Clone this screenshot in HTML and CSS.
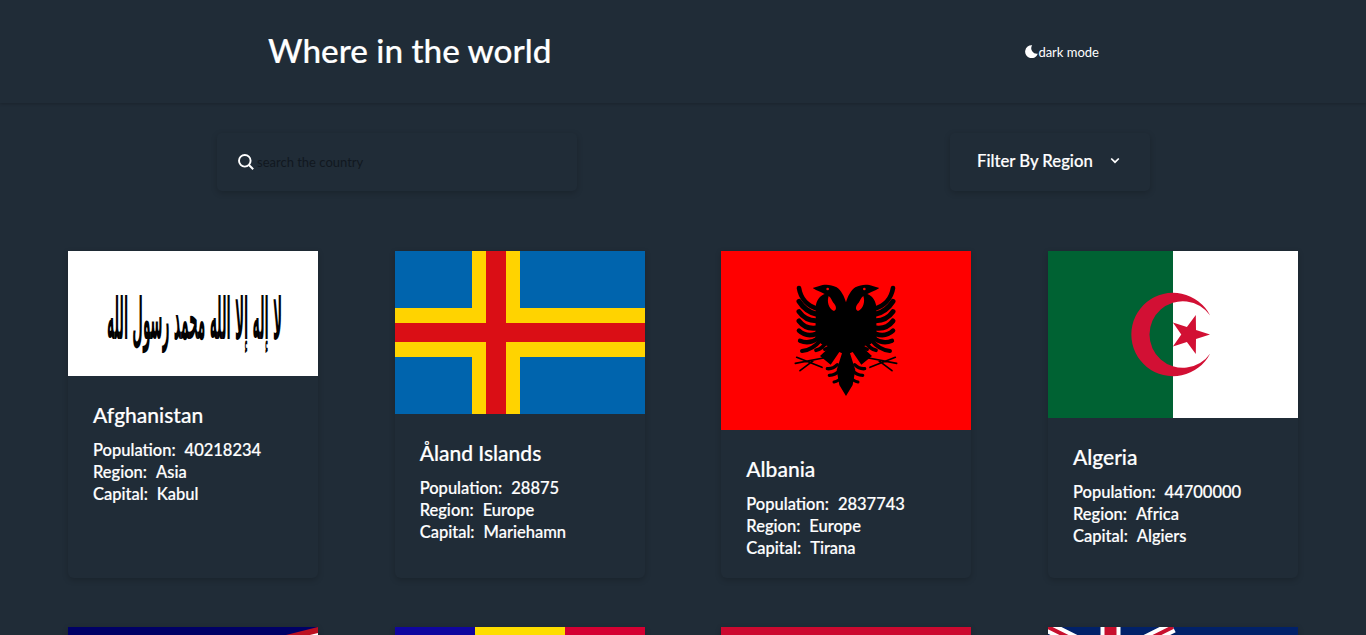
FILE: index.html
```html
<!DOCTYPE html>
<html lang="en">
<head>
<meta charset="utf-8">
<title>Where in the world</title>
<link rel="stylesheet" href="styles.css">
</head>
<body>
<header class="site-header">
  <h1 class="site-title">Where in the world</h1>
  <button class="mode-toggle" type="button">
    <svg class="moon" viewBox="0 0 12 12"><path d="M6.6 0.2A6 6 0 1 0 11.8 8.1 5.2 5.2 0 0 1 6.6 0.2Z" fill="#fff"/></svg>
    <span>dark mode</span>
  </button>
</header>
<main>
  <section class="toolbar">
    <label class="search">
      <svg class="search-icon" viewBox="0 0 16 16"><circle cx="6.8" cy="6.8" r="5.8" fill="none" stroke="#fff" stroke-width="1.9"/><path d="M11 11l4.2 4.2" stroke="#fff" stroke-width="2" fill="none"/></svg>
      <input class="search-input" type="text" placeholder="search the country">
    </label>
    <div class="filter">
      <span>Filter By Region</span>
      <svg class="chevron" viewBox="0 0 10 7"><path d="M1.2 1.5L5 5.2 8.8 1.5" fill="none" stroke="#fff" stroke-width="1.7"/></svg>
    </div>
  </section>
  <section class="countries">
    <article class="card">
      <svg class="flag" viewBox="0 0 250 125" width="250" height="125">
        <rect width="250" height="125" fill="#fff"/>
        <text class="shahada" x="214" y="88" textLength="175" lengthAdjust="spacingAndGlyphs" direction="rtl" text-anchor="start">لا إله إلا الله محمد رسول الله</text>
      </svg>
      <div class="card-body">
        <h2 class="name">Afghanistan</h2>
        <p class="fact">Population:<span class="val">40218234</span></p>
        <p class="fact">Region:<span class="val">Asia</span></p>
        <p class="fact">Capital:<span class="val">Kabul</span></p>
      </div>
    </article>
    <article class="card">
      <svg class="flag" viewBox="0 0 250 163" width="250" height="163">
        <rect width="250" height="163" fill="#0064ad"/>
        <rect x="77" width="48" height="163" fill="#ffd300"/>
        <rect y="57" width="250" height="49" fill="#ffd300"/>
        <rect x="91" width="20" height="163" fill="#da0e15"/>
        <rect y="72" width="250" height="19" fill="#da0e15"/>
      </svg>
      <div class="card-body">
        <h2 class="name">Åland Islands</h2>
        <p class="fact">Population:<span class="val">28875</span></p>
        <p class="fact">Region:<span class="val">Europe</span></p>
        <p class="fact">Capital:<span class="val">Mariehamn</span></p>
      </div>
    </article>
    <article class="card">
      <svg class="flag" viewBox="0 0 250 179" width="250" height="179">
        <rect width="250" height="179" fill="#f00"/>
        <g transform="translate(59 19) scale(.3333)">
          <g id="half">
            <g fill="none" stroke="#000" stroke-linecap="round">
              <path d="M112 116C86 108 62 88 57 54" stroke-width="14"/>
              <path d="M108 132Q76 124 57 94" stroke-width="15"/>
              <path d="M108 152Q76 152 57 125" stroke-width="15"/>
              <path d="M108 174Q76 178 57 153" stroke-width="15"/>
              <path d="M108 192Q78 202 57 182" stroke-width="14"/>
              <path d="M112 206Q86 224 60 212" stroke-width="13"/>
              <path d="M120 212Q100 238 66 243" stroke-width="12"/>
              <path d="M140 214Q128 236 108 241" stroke-width="11"/>
              <path d="M158 216Q152 232 134 238" stroke-width="10"/>
              <path d="M142 296Q158 298 172 284" stroke-width="10"/>
              <path d="M148 316Q166 316 180 300" stroke-width="10"/>
              <path d="M162 336Q176 334 186 320" stroke-width="9"/>
              <path d="M50 262L126 292M46 280L130 264M60 302L100 272" stroke-width="5"/>
            </g>
            <path d="M198 97C192 78 184 62 170 52 152 42 132 42 118 48L98 54 108 60 122 66 134 72C120 78 112 88 108 104L106 205 124 222 150 230 120 258 152 284 178 246 186 250 170 300 178 345 198 378Z" fill="#000"/>
            <path d="M146 78C140 95 146 116 162 123 172 118 168 106 160 98 155 92 154 84 146 78Z" fill="#f00"/>
            <circle cx="143" cy="57" r="4" fill="#f00"/>
          </g>
          <g transform="translate(396 0) scale(-1 1)">
            <use href="#half"/>
          </g>
        </g>
      </svg>
      <div class="card-body">
        <h2 class="name">Albania</h2>
        <p class="fact">Population:<span class="val">2837743</span></p>
        <p class="fact">Region:<span class="val">Europe</span></p>
        <p class="fact">Capital:<span class="val">Tirana</span></p>
      </div>
    </article>
    <article class="card">
      <svg class="flag" viewBox="0 0 250 167" width="250" height="167">
        <rect width="250" height="167" fill="#fff"/>
        <rect width="125" height="167" fill="#006233"/>
        <path fill-rule="evenodd" fill="#d21034" d="M162.2 102.4A41.7 41.7 0 1 1 162.2 64.6 33.3 33.3 0 1 0 162.2 102.4Z"/>
        <polygon fill="#d21034" points="162,83.5 148,88 147.8,103 138.9,91 124.9,95.5 133.3,83.5 124.9,71.5 138.9,76 147.8,64 148,79"/>
      </svg>
      <div class="card-body">
        <h2 class="name">Algeria</h2>
        <p class="fact">Population:<span class="val">44700000</span></p>
        <p class="fact">Region:<span class="val">Africa</span></p>
        <p class="fact">Capital:<span class="val">Algiers</span></p>
      </div>
    </article>
    <article class="card">
      <svg class="flag" viewBox="0 0 250 125" width="250" height="125">
        <rect width="250" height="125" fill="#006"/>
        <polygon points="0,62.5 250,0 250,125" fill="#bd1021"/>
        <polygon points="20,62.5 250,6 250,119" fill="#fff"/>
      </svg>
      <div class="card-body">
        <h2 class="name">American Samoa</h2>
        <p class="fact">Population:<span class="val">55197</span></p>
        <p class="fact">Region:<span class="val">Oceania</span></p>
        <p class="fact">Capital:<span class="val">Pago Pago</span></p>
      </div>
    </article>
    <article class="card">
      <svg class="flag" viewBox="0 0 250 175" width="250" height="175">
        <rect width="80" height="175" fill="#10069f"/>
        <rect x="80" width="90" height="175" fill="#fedd00"/>
        <rect x="170" width="80" height="175" fill="#d50032"/>
      </svg>
      <div class="card-body">
        <h2 class="name">Andorra</h2>
        <p class="fact">Population:<span class="val">77265</span></p>
        <p class="fact">Region:<span class="val">Europe</span></p>
        <p class="fact">Capital:<span class="val">Andorra la Vella</span></p>
      </div>
    </article>
    <article class="card">
      <svg class="flag" viewBox="0 0 250 167" width="250" height="167">
        <rect width="250" height="84" fill="#cc092f"/>
        <rect y="84" width="250" height="83" fill="#000"/>
      </svg>
      <div class="card-body">
        <h2 class="name">Angola</h2>
        <p class="fact">Population:<span class="val">32866268</span></p>
        <p class="fact">Region:<span class="val">Africa</span></p>
        <p class="fact">Capital:<span class="val">Luanda</span></p>
      </div>
    </article>
    <article class="card">
      <svg class="flag" viewBox="0 0 250 125" width="250" height="125">
        <rect width="250" height="125" fill="#012169"/>
        <path d="M0 0L125 62.5M125 0L0 62.5" stroke="#fff" stroke-width="12"/>
        <path d="M0 0L125 62.5M125 0L0 62.5" stroke="#c8102e" stroke-width="4"/>
        <path d="M62.5 0V62.5M0 31.25H125" stroke="#fff" stroke-width="20"/>
        <path d="M62.5 0V62.5M0 31.25H125" stroke="#c8102e" stroke-width="12"/>
      </svg>
      <div class="card-body">
        <h2 class="name">Anguilla</h2>
        <p class="fact">Population:<span class="val">13452</span></p>
        <p class="fact">Region:<span class="val">Americas</span></p>
        <p class="fact">Capital:<span class="val">The Valley</span></p>
      </div>
    </article>
  </section>
</main>
</body>
</html>
```
FILE: styles.css
```css
html { overflow: hidden; }
* { box-sizing: border-box; }
body {
  margin: 0;
  background: #202c37;
  color: #fff;
  font-family: "Lato", "Noto Sans", sans-serif;
  -webkit-text-stroke: .2px #fff;
}
.site-header {
  height: 103px;
  padding: 0 267px 0 268px;
  display: flex;
  align-items: center;
  justify-content: space-between;
  box-shadow: 0 1px 3px rgba(0, 0, 0, .2);
}
.site-title {
  margin: 0 0 4px;
  font-size: 33.3px;
  font-weight: 500;
}
.mode-toggle {
  display: flex;
  align-items: center;
  padding: 0;
  background: none;
  border: 0;
  color: #fff;
  font: 13px "Lato", sans-serif;
  -webkit-text-stroke: 0;
}
.moon { width: 13px; height: 13px; }
.toolbar {
  padding: 30px 216px 0 217px;
  display: flex;
  justify-content: space-between;
}
.search, .filter {
  height: 58px;
  display: flex;
  align-items: center;
  border-radius: 5px;
  box-shadow: 0 2px 6px rgba(0, 0, 0, .2);
}
.search { width: 360px; padding-left: 21px; }
.search-icon { width: 16px; height: 16px; flex: none; margin-right: 3px; }
.search-input {
  flex: 1;
  background: none;
  border: 0;
  outline: 0;
  padding: 0;
  color: #111;
  font: 13px "Lato", sans-serif;
  -webkit-text-stroke: 0;
}
.search-input::placeholder { color: #111820; opacity: 1; -webkit-text-stroke: 0; }
.filter {
  width: 200px;
  padding-left: 27px;
  gap: 17px;
  font-size: 16.7px;
  font-weight: 500;
}
.filter span { margin-top: -3px; }
.chevron { width: 10px; height: 7px; margin-top: -4px; }
.countries {
  margin-top: 60px;
  padding: 0 68px;
  display: grid;
  grid-template-columns: repeat(4, 250px);
  justify-content: space-between;
  row-gap: 49px;
}
.card {
  border-radius: 0 0 6px 6px;
  box-shadow: 0 2px 6px rgba(0, 0, 0, .2);
  padding-bottom: 19px;
}
.flag { display: block; }
.card-body { padding: 25px 25px 0; }
.name {
  margin: 0 0 10px;
  font-size: 21px;
  font-weight: 500;
  line-height: 28px;
}
.fact {
  margin: 0;
  font-size: 16.5px;
  font-weight: 500;
  line-height: 22px;
}
.val { margin-left: 9px; }
.shahada {
  font-family: "DejaVu Sans", sans-serif;
  font-weight: 700;
  font-size: 58px;
  -webkit-text-stroke: 0;
  opacity: .99;
}
```
